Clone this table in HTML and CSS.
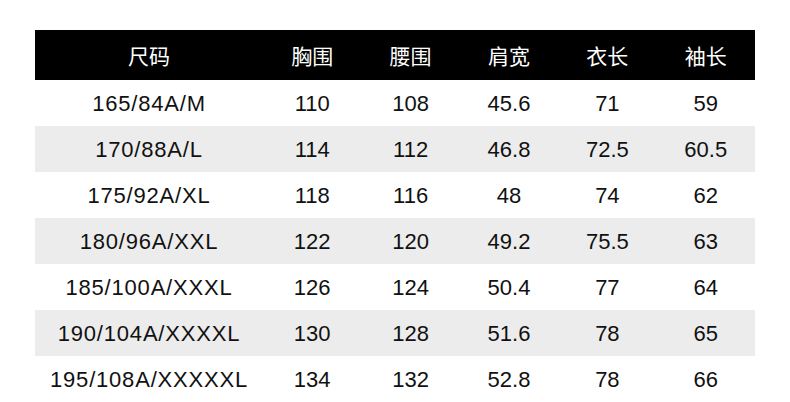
FILE: index.html
```html
<!DOCTYPE html>
<html lang="zh">
<head>
<meta charset="utf-8">
<title>尺码表</title>
<link rel="stylesheet" href="styles.css">
</head>
<body>
<div class="page">
<table class="size-table">
<colgroup><col class="c-size"><col><col><col><col><col></colgroup>
<thead>
<tr><th>尺码</th><th>胸围</th><th>腰围</th><th>肩宽</th><th>衣长</th><th>袖长</th></tr>
</thead>
<tbody>
<tr><td class="size">165/84A/M</td><td>110</td><td>108</td><td>45.6</td><td>71</td><td>59</td></tr>
<tr class="alt"><td class="size">170/88A/L</td><td>114</td><td>112</td><td>46.8</td><td>72.5</td><td>60.5</td></tr>
<tr><td class="size">175/92A/XL</td><td>118</td><td>116</td><td>48</td><td>74</td><td>62</td></tr>
<tr class="alt"><td class="size">180/96A/XXL</td><td>122</td><td>120</td><td>49.2</td><td>75.5</td><td>63</td></tr>
<tr><td class="size">185/100A/XXXL</td><td>126</td><td>124</td><td>50.4</td><td>77</td><td>64</td></tr>
<tr class="alt"><td class="size">190/104A/XXXXL</td><td>130</td><td>128</td><td>51.6</td><td>78</td><td>65</td></tr>
<tr><td class="size">195/108A/XXXXXL</td><td>134</td><td>132</td><td>52.8</td><td>78</td><td>66</td></tr>
</tbody>
</table>
</div>
</body>
</html>
```
FILE: styles.css
```css
html, body {
  margin: 0;
  padding: 0;
  background: #fff;
}
.page {
  padding: 30px 0 0 35px;
}
.size-table {
  width: 720px;
  border-collapse: collapse;
  table-layout: fixed;
  font-family: "Liberation Sans", Arial, "Noto Sans CJK SC", sans-serif;
  font-size: 22px;
  color: #111;
}
.c-size {
  width: 228px;
}
.size-table th {
  background: #000;
  color: #fff;
  height: 50px;
  padding: 0;
  font-weight: 400;
  font-size: 21px;
  font-family: "Noto Sans CJK SC", sans-serif;
  text-align: center;
  vertical-align: middle;
}
.size-table td {
  height: 44px;
  padding: 2px 0 0;
  text-align: center;
  vertical-align: middle;
}
.size-table td.size {
  letter-spacing: 0.8px;
}
.size-table tr.alt td {
  background: #ececec;
}
```
